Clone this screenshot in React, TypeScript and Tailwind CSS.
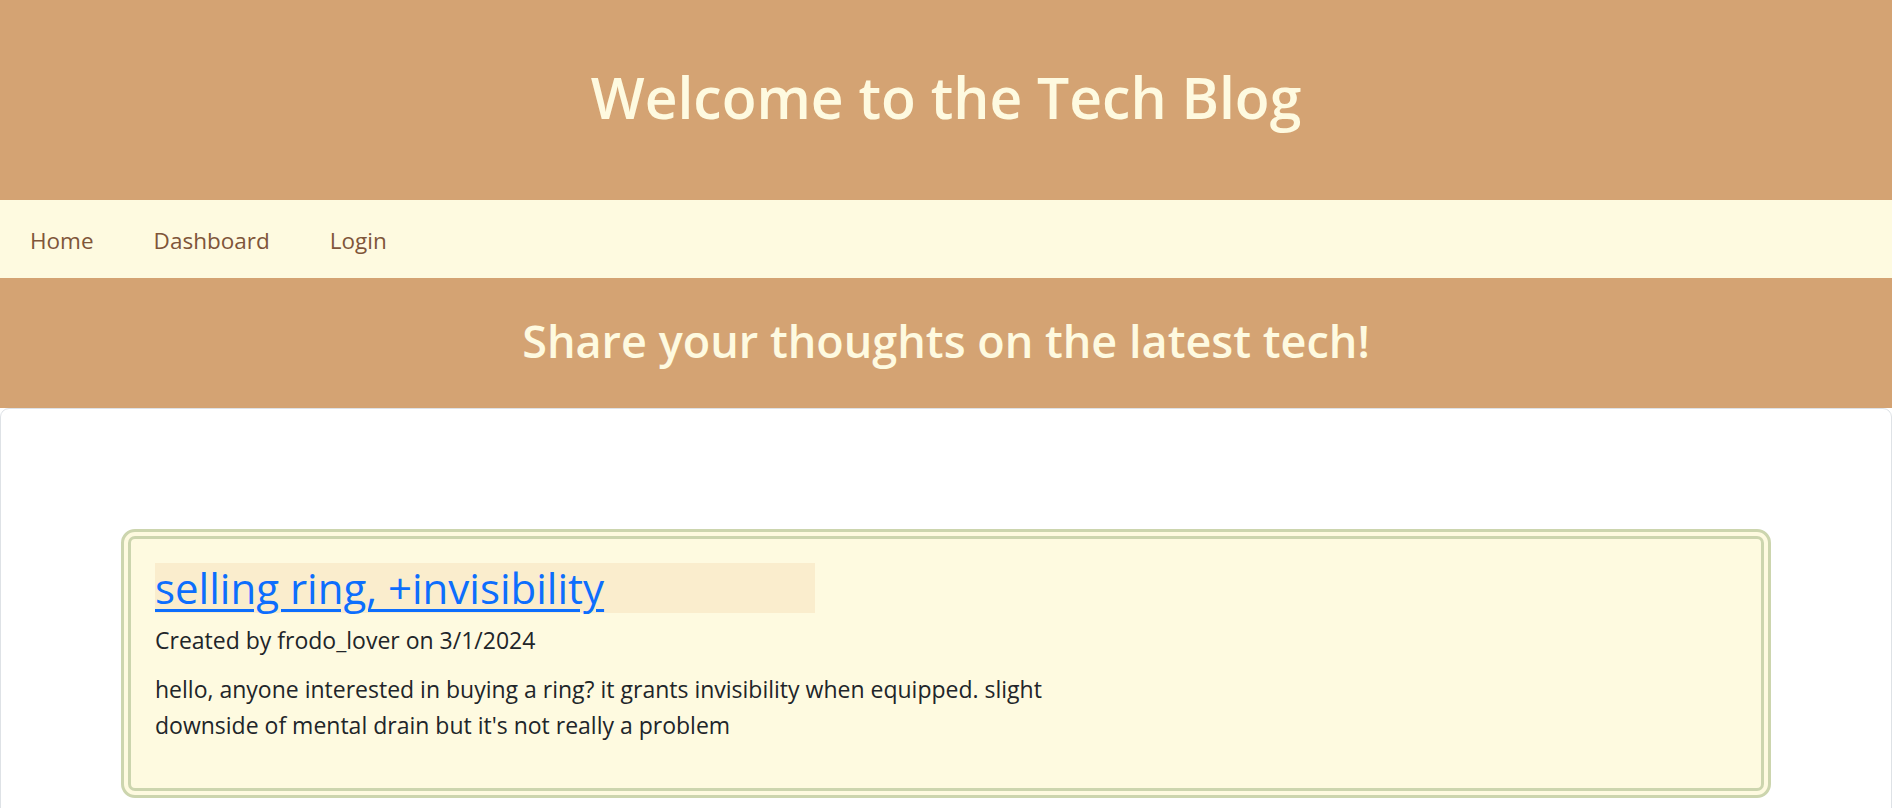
import React from "react";

export default function App() {
  return (
    <div
      className="min-h-[808px] bg-white text-[#212529]"
      style={{ fontFamily: '"Open Sans", "Noto Sans", sans-serif' }}
    >
      <header className="h-[200px] bg-[#d4a373] flex items-center justify-center">
        <h1 className="text-[57px] leading-[1.2] font-semibold text-[#fefae0] pb-[6px]">
          Welcome to the Tech Blog
        </h1>
      </header>
      <nav className="h-[78px] bg-[#fefae0] flex items-center pt-[3px]">
        <a className="pl-[30px] pr-[30px] text-[22.5px] leading-[36px] text-[#7f5539]">Home</a>
        <a className="px-[30px] text-[22.5px] leading-[36px] text-[#7f5539]">Dashboard</a>
        <a className="px-[30px] text-[22.5px] leading-[36px] text-[#7f5539]">Login</a>
      </nav>
      <section className="h-[130px] bg-[#d4a373] flex items-center justify-center">
        <h2 className="text-[45px] leading-[1.2] font-semibold text-[#fefae0] pb-[4px]">
          Share your thoughts on the latest tech!
        </h2>
      </section>
      <main className="border border-[#dee2e6] rounded-t-[9px] pt-[120px] px-[120px] pb-[40px]">
        <article className="border-[10px] border-double border-[#ccd5ae] rounded-[14px] bg-[#fefae0] p-[24px]">
          <div className="w-[660px] bg-[#faedcd]">
            <a className="text-[42px] leading-[50px] font-medium text-[#0d6efd] underline decoration-[2.5px] underline-offset-[5px]">
              selling ring, +invisibility
            </a>
          </div>
          <p className="text-[23px] leading-[36px] pt-[9px] mb-[13px]">Created by frodo_lover on 3/1/2024</p>
          <p className="text-[23px] leading-[36px] mb-[21px]">
            hello, anyone interested in buying a ring? it grants invisibility when equipped. slight
            <br />
            downside of mental drain but it's not really a problem
          </p>
        </article>
      </main>
    </div>
  );
}
